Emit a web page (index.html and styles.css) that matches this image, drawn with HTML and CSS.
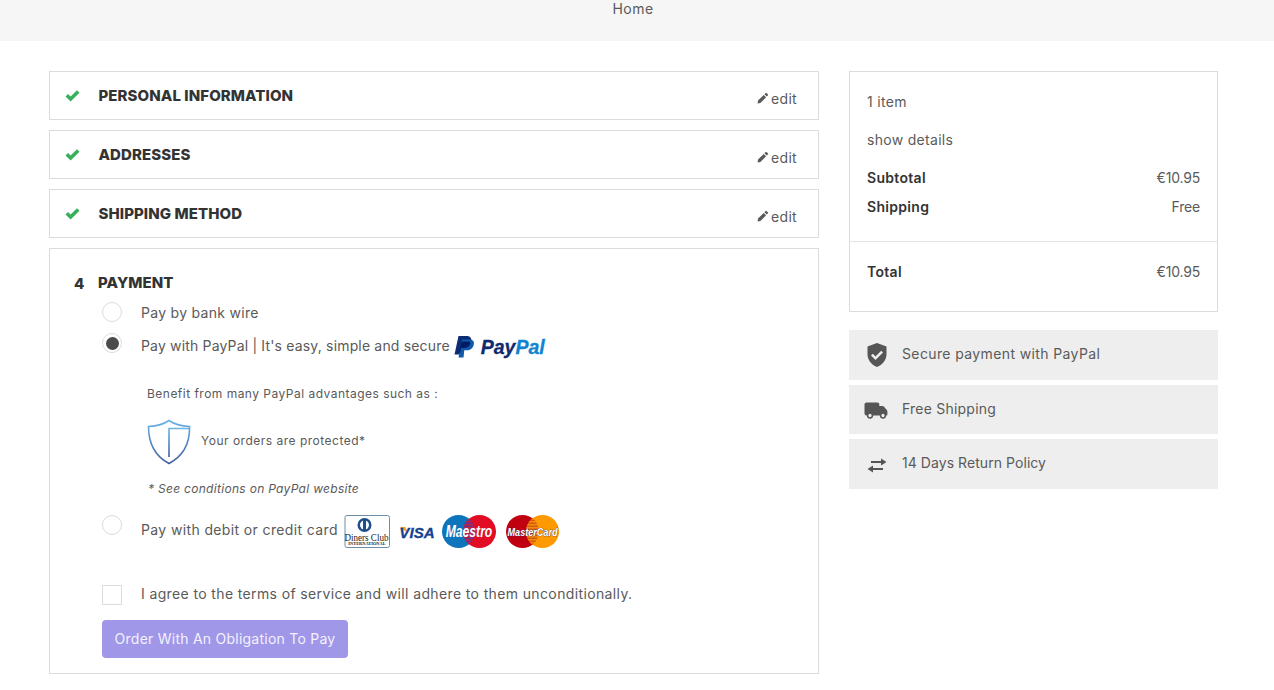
FILE: index.html
```html
<!DOCTYPE html>
<html lang="en">
<head>
<meta charset="utf-8">
<title>Checkout</title>
<link rel="stylesheet" href="styles.css">
</head>
<body>
<header class="topbar"><a class="home">Home</a></header>
<main class="layout">
  <section class="steps">
    <div class="step done">
      <svg class="check" viewBox="0 0 15 12"><path d="M.5 6.500 3 4l2.600 2.600L12 .3 14.500 2.800 5.600 11.600z"/></svg>
      <h2 class="step-title">PERSONAL INFORMATION</h2>
      <a class="edit"><svg class="pencil" viewBox="0 0 12 12"><path d="M8.400 1.200a1 1 0 0 1 1.400 0l1 1a1 1 0 0 1 0 1.400l-1 1L7.400 2.200zM6.700 2.900 9.100 5.300 3.400 11 .6 11.500 1 8.600z"/></svg>edit</a>
    </div>
    <div class="step done">
      <svg class="check" viewBox="0 0 15 12"><path d="M.5 6.500 3 4l2.600 2.600L12 .3 14.500 2.800 5.600 11.600z"/></svg>
      <h2 class="step-title">ADDRESSES</h2>
      <a class="edit"><svg class="pencil" viewBox="0 0 12 12"><path d="M8.400 1.200a1 1 0 0 1 1.400 0l1 1a1 1 0 0 1 0 1.400l-1 1L7.400 2.200zM6.700 2.900 9.100 5.300 3.400 11 .6 11.500 1 8.600z"/></svg>edit</a>
    </div>
    <div class="step done">
      <svg class="check" viewBox="0 0 15 12"><path d="M.5 6.500 3 4l2.600 2.600L12 .3 14.500 2.800 5.600 11.600z"/></svg>
      <h2 class="step-title">SHIPPING METHOD</h2>
      <a class="edit"><svg class="pencil" viewBox="0 0 12 12"><path d="M8.400 1.200a1 1 0 0 1 1.400 0l1 1a1 1 0 0 1 0 1.400l-1 1L7.400 2.200zM6.700 2.900 9.100 5.300 3.400 11 .6 11.500 1 8.600z"/></svg>edit</a>
    </div>
    <div class="step payment">
      <div class="pay-head"><span class="step-num">4</span><h2 class="step-title">PAYMENT</h2></div>
      <div class="option option-bank"><span class="radio"></span><span>Pay by bank wire</span></div>
      <div class="option option-paypal">
        <span class="radio radio-on"></span><span class="pp-label">Pay with PayPal | It's easy, simple and secure</span>
        <span class="pp-logo">
          <svg class="pp-mark" viewBox="0 0 20 22"><path fill="#0c2c74" d="M4.500 0H12c4 0 6 2 5.300 5.500C16.400 10 13 12 9.500 12H7L5.700 18.500H.5z"/><path fill="#1059ad" d="M8 3.500h7.500c3.300 0 5 1.800 4.300 5-.8 3.800-3.600 5.800-7 5.800h-2.500L9.500 21.500H4.500z"/><path fill="#001c64" d="M7.400 6.300c.1-.6.4-.9 1-.9h7.400c.5.900.6 1.900.2 3.100C15 11 12.500 12 9.500 12H7l-.9 4.500H4.900z"/></svg>
          <span class="pp-text"><span class="pp-dark">Pay</span><span class="pp-light">Pal</span></span>
        </span>
      </div>
      <div class="pp-details">
        <p class="pp-benefit">Benefit from many PayPal advantages such as :</p>
        <div class="pp-protect">
          <svg class="shield" viewBox="0 0 44 46">
            <defs><linearGradient id="sg" x1="0" y1="0" x2="0" y2="1"><stop offset="0" stop-color="#6bb4e8"/><stop offset="1" stop-color="#3f5c9e"/></linearGradient></defs>
            <path fill="none" stroke="url(#sg)" stroke-width="1.600" d="M22 1.500C17 5 9 7 1.500 7.500 1.500 22 6 36 22 44.500 38 36 43 22 42.500 7.500 35 7 27 5 22 1.500z"/>
            <path fill="none" stroke="url(#sg)" stroke-width="1.600" d="M22 38V9.500H42"/>
          </svg>
          <span class="protect-text">Your orders are protected*</span>
        </div>
        <p class="pp-note">* See conditions on PayPal website</p>
      </div>
      <div class="option option-card">
        <span class="radio"></span><span class="card-label">Pay with debit or credit card</span>
        <svg class="card-svg" viewBox="0 0 216 34">
          <defs>
            <clipPath id="mL"><circle cx="114.500" cy="16.500" r="16.500"/></clipPath>
            <clipPath id="cL"><circle cx="178.500" cy="16.500" r="16.500"/></clipPath>
            <pattern id="st1" width="3" height="3" patternUnits="userSpaceOnUse"><rect width="3" height="3" fill="#6d2f88"/><rect width="3" height="1.500" fill="#c32046"/></pattern>
            <pattern id="st2" width="3" height="3" patternUnits="userSpaceOnUse"><rect width="3" height="3" fill="#d65a10"/><rect width="3" height="1.500" fill="#f08a10"/></pattern>
          </defs>
          <rect x="1" y=".5" width="44.500" height="32" rx="2" fill="#fff" stroke="#6d8ea8"/>
          <circle cx="20.500" cy="10" r="7" fill="#1c4f8c"/><circle cx="20.500" cy="10" r="4.500" fill="#fff"/><rect x="19" y="5" width="3" height="10" fill="#1c4f8c"/>
          <text transform="translate(22.500 25.500) scale(.82 1)" class="t-diners">Diners Club</text>
          <text transform="translate(23 29.800) scale(.98 1)" class="t-intl">INTERNATIONAL</text>
          <path d="M56 12h5.500l2 6z" fill="#f2a31d"/>
          <text transform="translate(73 22.500) scale(1.010 1)" class="t-visa">VISA</text>
          <circle cx="114.500" cy="16.500" r="16.500" fill="#0e74bc"/><circle cx="135.500" cy="16.500" r="16.500" fill="#e30c25"/>
          <circle cx="135.500" cy="16.500" r="16.500" fill="url(#st1)" clip-path="url(#mL)"/>
          <text transform="translate(125 22) scale(.76 1)" class="t-maestro">Maestro</text>
          <circle cx="178.500" cy="16.500" r="16.500" fill="#c00010"/><circle cx="198.500" cy="16.500" r="16.500" fill="#ff9900"/>
          <circle cx="198.500" cy="16.500" r="16.500" fill="url(#st2)" clip-path="url(#cL)"/>
          <text transform="translate(188.500 20.500) scale(.79 1)" class="t-mc">MasterCard</text>
        </svg>
      </div>
      <div class="option option-terms"><span class="box"></span><span class="terms-label">I agree to the terms of service and will adhere to them unconditionally.</span></div>
      <button class="order" type="button">Order With An Obligation To Pay</button>
    </div>
  </section>
  <aside class="side">
    <div class="summary">
      <div class="sum-top">
        <p class="sum-line">1 item</p>
        <p class="sum-line">show details</p>
        <div class="sum-row sum-sub"><b>Subtotal</b><span>€10.95</span></div>
        <div class="sum-row sum-ship"><b>Shipping</b><span>Free</span></div>
      </div>
      <div class="sum-total"><div class="sum-row"><b>Total</b><span>€10.95</span></div></div>
    </div>
    <div class="perks">
      <div class="perk perk-a"><svg class="perk-icon" viewBox="0 0 24 24"><path transform="translate(1 0)" fill="#555" fill-rule="evenodd" d="M12 0 2.500 3.500V11c0 6 4 11 9.500 13 5.500-2 9.500-7 9.500-13V3.500zM10.500 17l-4.500-4.500 1.800-1.800 2.700 2.700 5.700-5.700L18 9.500z"/></svg><span class="perk-text">Secure payment with PayPal</span></div>
      <div class="perk perk-b"><svg class="perk-icon" viewBox="0 0 24 24"><path fill="#555" d="M2.500 4.500h11c1 0 1.800.8 1.800 1.800V8h3.200c.5 0 1 .2 1.300.6l3 3.400c.4.400.6.900.6 1.400V16.500c0 .6-.4 1-1 1H2.500C1.400 17.500.5 16.600.5 15.500v-9c0-1.100.9-2 2-2z"/><circle cx="6" cy="17.500" r="2.400" fill="#eee" stroke="#555" stroke-width="1.500"/><circle cx="19" cy="17.500" r="2.400" fill="#eee" stroke="#555" stroke-width="1.500"/></svg><span class="perk-text">Free Shipping</span></div>
      <div class="perk perk-c"><svg class="perk-icon" viewBox="0 0 24 24"><path fill="#555" d="M17 6.500l5.500 3.500-5.500 3.500V11H7V9h10zM9 13.500V16h10v2H9v2.500l-5.500-3.500z"/></svg><span class="perk-text">14 Days Return Policy</span></div>
    </div>
  </aside>
</main>
</body>
</html>
```
FILE: styles.css
```css
* { box-sizing: border-box; }
html, body { margin: 0; padding: 0; }
body {
  background: #fff;
  color: #5a5a5a;
  font-family: Inter, "Noto Sans", sans-serif;
  font-size: 14px;
  letter-spacing: .3px;
  overflow: hidden;
}
p, h2 { margin: 0; }
.topbar {
  height: 41px;
  background: #f6f6f6;
  text-align: center;
  line-height: 18px;
  padding-right: 8px;
}
.home { letter-spacing: .5px; }
.layout {
  display: flex;
  gap: 30px;
  padding: 30px 56px 0 49px;
  align-items: flex-start;
}
.steps {
  width: 770px;
  display: flex;
  flex-direction: column;
  gap: 10px;
}
.step { border: 1px solid #dcdcdc; }
.done {
  height: 49px;
  display: flex;
  align-items: center;
  padding: 0 21px 0 15px;
}
.check { width: 15px; height: 12px; fill: #37b05a; margin-right: 18.500px; flex: none; }
.step-title {
  font-size: 15px;
  font-weight: 800;
  color: #333;
  letter-spacing: .08px;
  line-height: 20px;
}
.done .step-title { flex: 1; margin-top: 1px; }
.edit { display: flex; align-items: center; margin-top: 5px; }
.pencil { width: 12px; height: 12px; fill: #5a5a5a; margin-right: 2px; }
.payment { height: 426px; padding: 24px 0 0 24px; }
.pay-head { display: flex; align-items: center; }
.step-num { width: 24px; font-size: 15px; font-weight: 800; color: #333; }
.option { display: flex; align-items: center; margin-left: 28px; height: 22px; }
.option-bank { margin-top: 8px; }
.option-paypal { margin-top: 12px; }
.radio {
  width: 20px;
  height: 20px;
  border: 1px solid #dcdcdc;
  border-radius: 50%;
  margin-right: 19px;
  flex: none;
  display: flex;
  align-items: center;
  justify-content: center;
}
.option-paypal .radio { align-self: flex-start; margin-top: -2px; }
.radio-on::after {
  content: "";
  width: 13px;
  height: 13px;
  border-radius: 50%;
  background: #4a4a4a;
}
.pp-label { letter-spacing: .17px; margin-bottom: 2px; }
.pp-logo { display: flex; align-items: center; margin-left: 4px; }
.pp-mark { width: 20px; height: 22px; margin-top: 2px; }
.pp-text { font: italic 700 19.500px "Liberation Sans", sans-serif; letter-spacing: 0; margin-left: 7px; margin-top: 2px; -webkit-text-stroke: .3px; }
.pp-dark { color: #0f2a6e; }
.pp-light { color: #0f84d0; }
.pp-details { margin-left: 73px; font-size: 12px; }
.pp-benefit { margin-top: 28px; line-height: 18px; letter-spacing: .48px; }
.pp-protect { display: flex; align-items: center; margin-top: 16px; height: 46px; letter-spacing: .5px; }
.shield { width: 44px; height: 46px; margin-right: 10px; }
.protect-text { margin-bottom: 4px; }
.pp-note { margin-top: 15px; font-style: italic; line-height: 18px; margin-left: 1px; }
.option-card { margin-top: 17px; height: 34px; align-items: flex-start; }
.card-label { line-height: 20px; margin-top: 5px; letter-spacing: .37px; }
.card-svg { width: 216px; height: 34px; display: block; margin-left: 6px; flex: none; }
.t-diners { font: 400 11px "Liberation Serif", serif; letter-spacing: 0; text-anchor: middle; fill: #222; }
.t-intl { font: 700 4.500px "Liberation Serif", serif; letter-spacing: 0; text-anchor: middle; fill: #222; }
.t-visa { font: italic 700 15px "Liberation Sans", sans-serif; letter-spacing: 0; fill: #14418f; stroke: #14418f; stroke-width: .3px; text-anchor: middle; }
.t-maestro { font: italic 700 16px "Liberation Sans", sans-serif; letter-spacing: 0; fill: #fff; text-anchor: middle; }
.t-mc { font: italic 700 11.500px "Liberation Sans", sans-serif; letter-spacing: 0; fill: #fff; stroke: #2a2a6a; stroke-width: .6px; paint-order: stroke; text-anchor: middle; }
.option-terms { margin-top: 34px; }
.terms-label { letter-spacing: .37px; margin-bottom: 2px; }
.box {
  width: 20px;
  height: 20px;
  border: 1px solid #dcdcdc;
  margin: 2px 19px 0 0;
  flex: none;
}
.order {
  display: block;
  margin: 15px 0 0 28px;
  width: 246px;
  height: 38px;
  border: 0;
  border-radius: 4px;
  padding: 0 0 2px;
  background: #a097e8;
  color: #f3f1fd;
  font: inherit;
  letter-spacing: .24px;
}
.side { width: 369px; }
.summary { border: 1px solid #dcdcdc; height: 241px; }
.sum-top { padding: 20px 17px 0; height: 170px; border-bottom: 1px solid #e3e3e3; }
.sum-line { line-height: 20px; margin-bottom: 18px; }
.sum-row { display: flex; justify-content: space-between; line-height: 20px; }
.sum-row b { font-weight: 600; color: #333; }
.sum-row span { letter-spacing: -.2px; }
.sum-ship { margin-top: 9px; }
.sum-total { padding: 20px 17px 0; }
.perks { margin-top: 18px; display: flex; flex-direction: column; gap: 5px; }
.perk { display: flex; align-items: center; background: #eee; padding-left: 15px; }
.perk-a { height: 50px; }
.perk-b { height: 49px; }
.perk-c { height: 50px; }
.perk-icon { width: 24px; height: 24px; margin-right: 14px; flex: none; }
.perk-text { margin-bottom: 4px; }
.perk-a .perk-text { letter-spacing: .38px; }
.perk-b .perk-text { letter-spacing: .22px; margin-bottom: 2px; }
.perk-c .perk-text { letter-spacing: .06px; }
```
